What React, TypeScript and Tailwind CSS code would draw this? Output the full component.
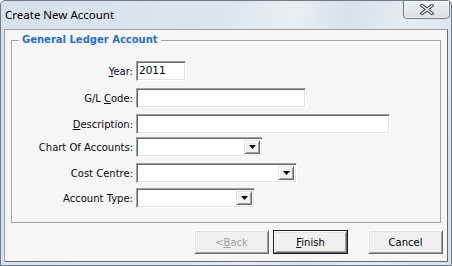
import React from "react";

const sunken =
  "border border-t-[#a0a0a0] border-l-[#a0a0a0] border-b-white border-r-white shadow-[inset_1px_1px_0_#696969,inset_-1px_-1px_0_#e3e3e3] bg-white";

function TextBox({ w, value }: { w: string; value?: string }) {
  return (
    <div className={`${sunken} ${w} h-[20px] flex items-center pl-[2px] text-[10.5px] text-black`}>
      {value}
    </div>
  );
}

function Combo({ w }: { w: string }) {
  return (
    <div className={`${sunken} ${w} h-[20px] flex justify-end p-[2px]`}>
      <div className="w-[16px] h-full bg-[#f0f0f0] border border-t-[#e3e3e3] border-l-[#e3e3e3] border-b-[#696969] border-r-[#696969] shadow-[inset_1px_1px_0_#ffffff,inset_-1px_-1px_0_#a0a0a0] flex items-center justify-center">
        <svg width="7" height="4" viewBox="0 0 7 4">
          <path d="M0 0H7L3.5 4Z" fill="#000" />
        </svg>
      </div>
    </div>
  );
}

function Row({
  label,
  mt,
  children,
}: {
  label: React.ReactNode;
  mt: string;
  children: React.ReactNode;
}) {
  return (
    <div className={`flex items-center ${mt}`}>
      <div className="w-[122px] text-right text-[10px] text-[#0a0a14] pr-[1px] leading-[13px] whitespace-nowrap">{label}</div>
      <div className="ml-[2px]">{children}</div>
    </div>
  );
}

function Btn({
  children,
  def,
  disabled,
}: {
  children: React.ReactNode;
  def?: boolean;
  disabled?: boolean;
}) {
  const inner =
    "w-full h-full flex items-center justify-center bg-[#f0f0f0] border border-t-white border-l-white border-b-[#696969] border-r-[#696969] shadow-[inset_1px_1px_0_#e3e3e3,inset_-1px_-1px_0_#a0a0a0]";
  return (
    <div className={`w-[75px] h-[24px] text-[10px] ${disabled ? "text-[#a0a0a0]" : "text-black"}`}>
      {def ? (
        <div className="w-full h-full border border-[#1a1a1a]">
          <div className={inner}>{children}</div>
        </div>
      ) : (
        <div className={inner}>{children}</div>
      )}
    </div>
  );
}

export default function App() {
  return (
    <div
      className="w-[452px] h-[266px] flex flex-col border border-[#6f7c88] rounded-t-[5px] bg-[linear-gradient(100deg,#d6e1ec_0%,#dce6ef_45%,#e8eef3_60%,#d8e2eb_70%,#e4ebf1_82%,#d9e3ec_100%)] overflow-hidden"
      style={{ fontFamily: '"DejaVu Sans", Verdana, sans-serif' }}
    >
      <div className="h-[28px] flex items-start justify-between">
        <div
          className="pl-[4px] pt-[6px] text-[11.5px] leading-[16px] text-black"
          style={{ fontFamily: '"Noto Sans", "Open Sans", sans-serif' }}
        >
          Create New Account
        </div>
        <div className="w-[47px] h-[19px] -mt-px mr-px border border-[#707a84] rounded-b-[4px] bg-[linear-gradient(180deg,#eef1f4,#dadfe4)] flex items-center justify-center shadow-[inset_0_0_0_1px_rgba(255,255,255,0.6)]">
          <svg width="14" height="11" viewBox="0 0 14 11">
            <path d="M2 1.5L12 9.5M12 1.5L2 9.5" stroke="#3a3f45" strokeWidth="3.4" strokeLinecap="square" />
            <path d="M2 1.5L12 9.5M12 1.5L2 9.5" stroke="#ffffff" strokeWidth="1.3" strokeLinecap="square" />
          </svg>
        </div>
      </div>
      <div className="flex-1 mx-[3px] mb-[3px] bg-[#f6f6f6] border border-t-[#a0a0a0] border-l-[#a0a0a0] border-b-[#6a6a6a] border-r-[#6a6a6a] flex flex-col">
        <fieldset className="ml-[6px] mt-[3px] w-[430px] h-[190px] border border-[#a3a3a3] shadow-[inset_1px_1px_0_#ffffff]">
          <legend className="ml-[7px] px-[3px] text-[10px] leading-[14px] font-bold text-[#1f6fd6]">
            General Ledger Account
          </legend>
          <Row mt="mt-[14px]" label={<><u>Y</u>ear:</>}>
            <TextBox w="w-[50px]" value="2011" />
          </Row>
          <Row mt="mt-[7px]" label={<>G/L <u>C</u>ode:</>}>
            <TextBox w="w-[170px]" />
          </Row>
          <Row mt="mt-[6px]" label={<><u>D</u>escription:</>}>
            <TextBox w="w-[254px]" />
          </Row>
          <Row mt="mt-[3px]" label="Chart Of Accounts:">
            <Combo w="w-[127px]" />
          </Row>
          <Row mt="mt-[6px]" label="Cost Centre:">
            <Combo w="w-[161px]" />
          </Row>
          <Row mt="mt-[5px]" label="Account Type:">
            <Combo w="w-[119px]" />
          </Row>
        </fieldset>
        <div className="mt-[7px] mr-[4px] flex justify-end">
          <Btn disabled>
            &lt; <u>B</u>ack
          </Btn>
          <div className="ml-[4px]">
            <Btn def>
              <span><u>F</u>inish</span>
            </Btn>
          </div>
          <div className="ml-[20px]">
            <Btn>Cancel</Btn>
          </div>
        </div>
      </div>
    </div>
  );
}
